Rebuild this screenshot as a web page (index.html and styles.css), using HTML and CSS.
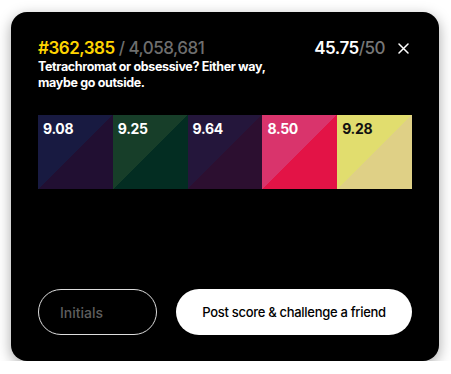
FILE: index.html
```html
<!DOCTYPE html>
<html>
<head>
<meta charset="utf-8">
<link rel="stylesheet" href="styles.css">
</head>
<body>
<div class="card">
  <div class="top">
    <div class="info">
      <div class="rank"><span class="pos">#362,385</span><span class="total"> / 4,058,681</span></div>
      <p class="msg">Tetrachromat or obsessive? Either way, maybe go outside.</p>
    </div>
    <div class="right">
      <span class="score">45.75</span><span class="max">/50</span>
      <svg class="close" width="11" height="11" viewBox="0 0 11 11"><path d="M1 1L10 10M10 1L1 10" stroke="#fff" stroke-width="1.5" stroke-linecap="round"/></svg>
    </div>
  </div>
  <div class="swatches">
    <div class="sw s1"><span>9.08</span></div>
    <div class="sw s2"><span>9.25</span></div>
    <div class="sw s3"><span>9.64</span></div>
    <div class="sw s4"><span>8.50</span></div>
    <div class="sw s5 dark"><span>9.28</span></div>
  </div>
  <div class="actions">
    <input class="initials" type="text" placeholder="Initials">
    <button class="post">Post score &amp; challenge a friend</button>
  </div>
</div>
</body>
</html>
```
FILE: styles.css
```css
html, body {
  margin: 0;
  padding: 0;
  background: #fff;
}
body {
  padding: 12px 12px 0 11px;
  font-family: Inter, "Liberation Sans", sans-serif;
}
.card {
  width: 428px;
  height: 349px;
  box-sizing: border-box;
  background: #000;
  border-radius: 16px;
  box-shadow: 0 4px 14px rgba(0,0,0,0.35);
  padding: 25px 27px 26px 27px;
  display: flex;
  flex-direction: column;
  color: #fff;
}
.top {
  display: flex;
  justify-content: space-between;
  align-items: flex-start;
}
.rank {
  font-size: 17px;
  font-weight: 600;
  letter-spacing: -0.5px;
  line-height: 22px;
}
.pos { color: #ffd500; }
.total { color: #6e6e6e; font-weight: 500; }
.msg {
  margin: 0;
  font-size: 12.5px;
  font-weight: 700;
  line-height: 16px;
  letter-spacing: -0.35px;
  width: 250px;
}
.right {
  display: flex;
  align-items: center;
  font-size: 17px;
  font-weight: 600;
  letter-spacing: -0.5px;
  line-height: 22px;
  margin-right: 3px;
}
.score { color: #fff; }
.max { color: #777; font-weight: 500; }
.close { margin-left: 13px; }
.swatches {
  display: flex;
  margin-top: 24px;
  height: 74px;
}
.sw {
  flex: 1;
  padding: 6px 5px;
  font-size: 14px;
  font-weight: 700;
  letter-spacing: -0.3px;
  line-height: 16px;
}
.sw.dark { color: #111; }
.s1 { background: linear-gradient(to bottom right, #181a41 50%, #210f32 50%); }
.s2 { background: linear-gradient(to bottom right, #173e29 50%, #032d22 50%); }
.s3 { background: linear-gradient(to bottom right, #24163b 50%, #2c0f30 50%); }
.s4 { background: linear-gradient(to bottom right, #d9346c 50%, #e31346 50%); }
.s5 { background: linear-gradient(to bottom right, #e1dd6e 50%, #dfd086 50%); }
.actions {
  margin-top: auto;
  display: flex;
  gap: 19px;
}
.initials {
  width: 119px;
  height: 46px;
  box-sizing: border-box;
  border: 1px solid #ddd;
  border-radius: 23px;
  background: transparent;
  padding: 0 0 0 21px;
  font-family: inherit;
  font-size: 14px;
  font-weight: 500;
  color: #fff;
  outline: none;
}
.initials::placeholder { color: #5e5e5e; }
.post {
  flex: 1;
  height: 46px;
  border: none;
  border-radius: 23px;
  background: #fff;
  color: #000;
  font-family: inherit;
  font-size: 13px;
  font-weight: 500;
  letter-spacing: -0.3px;
}
```
